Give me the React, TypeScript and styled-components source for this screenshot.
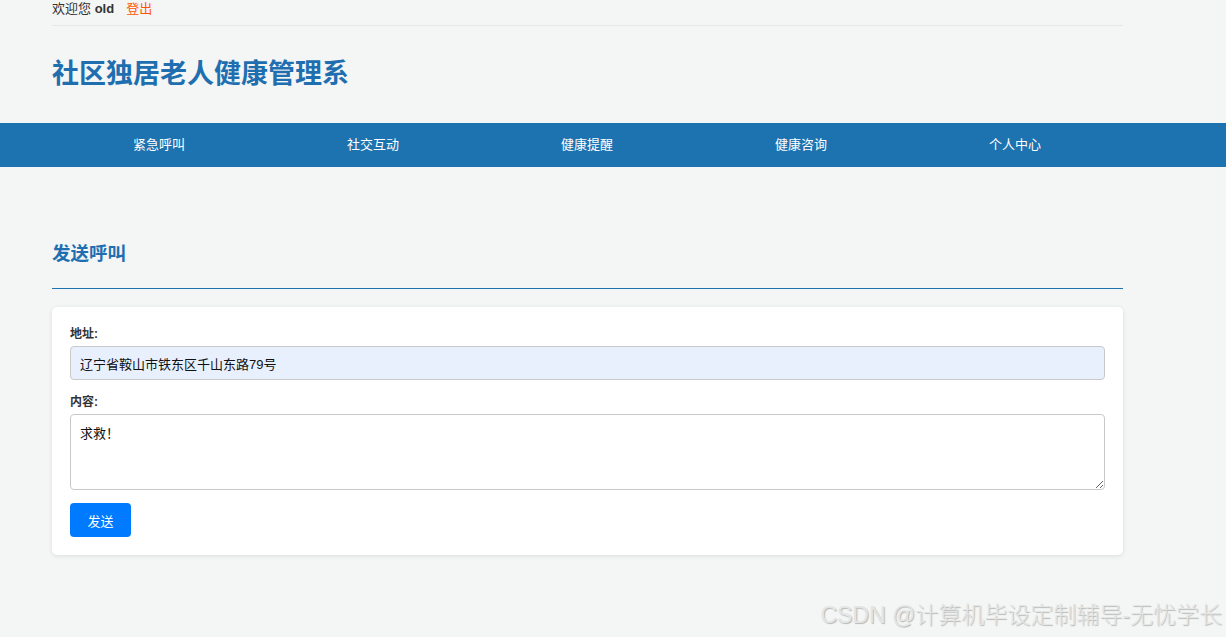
import styled, { createGlobalStyle } from "styled-components";

const GlobalStyle = createGlobalStyle`
	html, body {
		margin: 0;
		padding: 0;
		background: #f4f5f5;
		font-family: "Liberation Sans", "Noto Sans CJK SC", sans-serif;
		font-size: 13px;
		color: #333;
	}
`;

const Page = styled.div`
	position: relative;
	min-height: 637px;
`;

const Container = styled.div`
	width: 1071px;
	margin-left: 52px;
`;

const TopBar = styled.div`
	height: 26px;
	display: flex;
	align-items: flex-start;
	gap: 12px;
	border-bottom: 1px solid #e6e7e7;
	box-sizing: border-box;
	font-size: 13px;
	line-height: 18px;
	color: #333;
`;

const Welcome = styled.span`
	b {
		font-weight: 700;
	}
`;

const Logout = styled.a`
	color: #ff5500;
	text-decoration: none;
`;

const Title = styled.h1`
	margin: 0;
	padding: 31px 0 32px;
	font-size: 27px;
	line-height: 34px;
	font-weight: 700;
	color: #1f6fb0;
`;

const Nav = styled.nav`
	background: #1d72b0;
	height: 44px;
`;

const NavList = styled.ul`
	list-style: none;
	margin: 0 0 0 52px;
	padding: 0;
	width: 1070px;
	display: grid;
	grid-template-columns: repeat(5, 1fr);
	height: 100%;
`;

const NavItem = styled.li`
	display: flex;
	align-items: center;
	justify-content: center;
	padding-bottom: 4px;
	box-sizing: border-box;
	color: #fff;
	font-size: 13px;
`;

const Main = styled(Container)`
	padding-top: 73px;
`;

const SectionTitle = styled.h2`
	margin: 0;
	font-size: 18.5px;
	line-height: 28px;
	font-weight: 700;
	color: #1f6fb0;
	padding-bottom: 20px;
	border-bottom: 1px solid #1d72b0;
`;

const Card = styled.form`
	margin-top: 18px;
	background: #fff;
	border-radius: 5px;
	box-shadow: 0 1px 4px rgba(0, 0, 0, 0.1);
	padding: 18px 18px 18px;
	display: flex;
	flex-direction: column;
`;

const Label = styled.label`
	font-size: 12px;
	font-weight: 700;
	color: #333;
	line-height: 17px;
	padding-top: 1px;
	margin-bottom: 3px;
`;

const Input = styled.input`
	box-sizing: border-box;
	height: 34px;
	width: 100%;
	border: 1px solid #c9c9c9;
	border-radius: 4px;
	background: #e8f0fe;
	padding: 0 9px;
	font: inherit;
	font-size: 13px;
	color: #111;
	margin-bottom: 13px;
`;

const TextArea = styled.textarea`
	box-sizing: border-box;
	height: 76px;
	width: 100%;
	border: 1px solid #c9c9c9;
	border-radius: 4px;
	background: #fff;
	padding: 8px 9px;
	font: inherit;
	font-size: 13px;
	color: #111;
	margin-bottom: 13px;
	display: block;
`;

const Button = styled.button`
	align-self: flex-start;
	width: 61px;
	height: 34px;
	border: none;
	border-radius: 4px;
	background: #007bff;
	color: #fff;
	font: inherit;
	font-size: 13px;
`;

const Watermark = styled.div`
	position: absolute;
	right: 4px;
	bottom: 7px;
	font-size: 23px;
	font-weight: 300;
	color: #e4e5e5;
	text-shadow: 1px 1px 1px rgba(0, 0, 0, 0.25);
	font-family: "Liberation Sans", "Noto Sans CJK SC", sans-serif;
`;

const navItems = ["紧急呼叫", "社交互动", "健康提醒", "健康咨询", "个人中心"];

export default function App() {
	return (
		<Page>
			<GlobalStyle />
			<Container>
				<TopBar>
					<Welcome>
						欢迎您 <b>old</b>
					</Welcome>
					<Logout href="#">登出</Logout>
				</TopBar>
				<Title>社区独居老人健康管理系</Title>
			</Container>
			<Nav>
				<NavList>
					{navItems.map((item) => (
						<NavItem key={item}>{item}</NavItem>
					))}
				</NavList>
			</Nav>
			<Main>
				<SectionTitle>发送呼叫</SectionTitle>
				<Card onSubmit={(e) => e.preventDefault()}>
					<Label>地址:</Label>
					<Input defaultValue="辽宁省鞍山市铁东区千山东路79号" />
					<Label>内容:</Label>
					<TextArea defaultValue="求救！" />
					<Button type="submit">发送</Button>
				</Card>
			</Main>
			<Watermark>CSDN @计算机毕设定制辅导-无忧学长</Watermark>
		</Page>
	);
}
